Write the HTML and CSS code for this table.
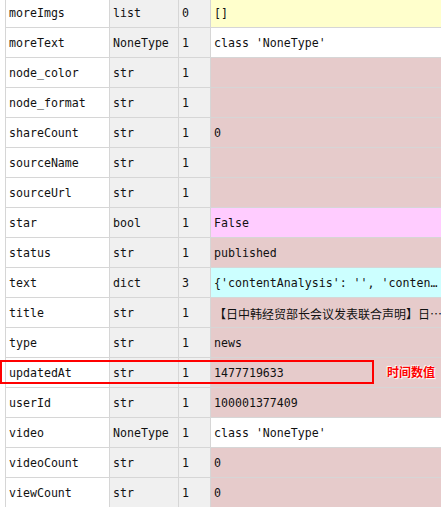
FILE: index.html
```html
<!DOCTYPE html>
<html>
<head>
<meta charset="utf-8">
<link rel="stylesheet" href="styles.css">
</head>
<body>
<div class="page">
  <div class="grid">
    <div class="c name">moreImgs</div><div class="c type">list</div><div class="c size">0</div><div class="c val yellow">[]</div>
    <div class="c name">moreText</div><div class="c type">NoneType</div><div class="c size">1</div><div class="c val white">class 'NoneType'</div>
    <div class="c name">node_color</div><div class="c type">str</div><div class="c size">1</div><div class="c val rose"></div>
    <div class="c name">node_format</div><div class="c type">str</div><div class="c size">1</div><div class="c val rose"></div>
    <div class="c name">shareCount</div><div class="c type">str</div><div class="c size">1</div><div class="c val rose">0</div>
    <div class="c name">sourceName</div><div class="c type">str</div><div class="c size">1</div><div class="c val rose"></div>
    <div class="c name">sourceUrl</div><div class="c type">str</div><div class="c size">1</div><div class="c val rose"></div>
    <div class="c name">star</div><div class="c type">bool</div><div class="c size">1</div><div class="c val pink">False</div>
    <div class="c name">status</div><div class="c type">str</div><div class="c size">1</div><div class="c val rose">published</div>
    <div class="c name">text</div><div class="c type">dict</div><div class="c size">3</div><div class="c val cyan">{'contentAnalysis': '', 'conten…</div>
    <div class="c name">title</div><div class="c type">str</div><div class="c size">1</div><div class="c val rose cjk">【日中韩经贸部长会议发表联合声明】日…</div>
    <div class="c name">type</div><div class="c type">str</div><div class="c size">1</div><div class="c val rose">news</div>
    <div class="c name">updatedAt</div><div class="c type">str</div><div class="c size">1</div><div class="c val rose">1477719633</div>
    <div class="c name">userId</div><div class="c type">str</div><div class="c size">1</div><div class="c val rose">100001377409</div>
    <div class="c name">video</div><div class="c type">NoneType</div><div class="c size">1</div><div class="c val white">class 'NoneType'</div>
    <div class="c name">videoCount</div><div class="c type">str</div><div class="c size">1</div><div class="c val rose">0</div>
    <div class="c name">viewCount</div><div class="c type">str</div><div class="c size">1</div><div class="c val rose">0</div>
  </div>
  <div class="highlight"></div>
  <div class="note">时间数值</div>
</div>
</body>
</html>
```

FILE: styles.css
```css
html, body {
  margin: 0;
  padding: 0;
  background: #ffffff;
  overflow: hidden;
}
.page {
  position: relative;
  width: 441px;
  height: 509px;
  overflow: hidden;
}
.grid {
  margin-top: -2px;
  margin-left: 5px;
  padding-left: 1px;
  display: grid;
  grid-template-columns: 103px 68px 31px 1fr;
  grid-auto-rows: 29px;
  gap: 1px;
  background: #d6d6d6;
  font-family: "DejaVu Sans Mono", "Liberation Mono", monospace;
  font-size: 11.6px;
  color: #111111;
}
.c {
  display: flex;
  align-items: center;
  padding-left: 3px;
  padding-top: 1px;
  white-space: nowrap;
  overflow: hidden;
}
.name { background: #ffffff; }
.type, .size { background: #f0f0f0; }
.yellow { background: #ffffcc; }
.white { background: #ffffff; }
.rose { background: #e6cbcb; }
.pink { background: #ffccff; }
.cyan { background: #ccffff; }
.cjk {
  font-family: "Noto Sans CJK SC", sans-serif;
  font-size: 12px;
}
.highlight {
  position: absolute;
  left: 0;
  top: 360px;
  width: 370px;
  height: 20px;
  border: 2px solid #ff0000;
}
.note {
  position: absolute;
  left: 387px;
  top: 363px;
  font-family: "Noto Sans CJK SC", sans-serif;
  font-weight: bold;
  font-size: 12px;
  line-height: 18px;
  color: #ff0000;
  text-shadow: 1px 1px 1px #ffffff, -1px -1px 1px #ffffff;
}
```
